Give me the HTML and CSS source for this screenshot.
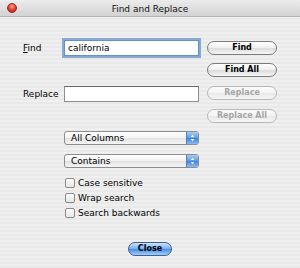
FILE: index.html
```html
<!DOCTYPE html>
<html>
<head>
<meta charset="utf-8">
<link rel="stylesheet" href="styles.css">
</head>
<body>
<div class="window">
  <div class="titlebar">
    <span class="close-dot"></span>
    <span class="title">Find and Replace</span>
    <span></span>
  </div>
  <div class="content">
    <div class="form">
      <span class="lbl"><u>F</u>ind</span>
      <div class="field focus">california</div>
      <button class="btn first">Find</button>

      <button class="btn col3">Find All</button>

      <span class="lbl">Replace</span>
      <div class="field"></div>
      <button class="btn disabled">Replace</button>

      <button class="btn disabled col3">Replace All</button>

      <div class="popup col2">
        <span class="popup-text">All Columns</span>
        <span class="popup-arrows"><svg width="12" height="12" viewBox="0 0 12 12"><path d="M6 2.5 L8 5 L4 5 Z M6 9.5 L8 7 L4 7 Z" fill="#fff"/></svg></span>
      </div>
      <div class="popup col2">
        <span class="popup-text">Contains</span>
        <span class="popup-arrows"><svg width="12" height="12" viewBox="0 0 12 12"><path d="M6 2.5 L8 5 L4 5 Z M6 9.5 L8 7 L4 7 Z" fill="#fff"/></svg></span>
      </div>

      <div class="checks col2">
        <div class="check"><span class="box"></span><span>Case sensitive</span></div>
        <div class="check"><span class="box"></span><span>Wrap search</span></div>
        <div class="check"><span class="box"></span><span>Search backwards</span></div>
      </div>
    </div>
    <div class="footer">
      <button class="btn default">Close</button>
    </div>
  </div>
</div>
</body>
</html>
```
FILE: styles.css
```css
* { box-sizing: border-box; }
html, body { margin: 0; padding: 0; }
body {
  width: 300px;
  height: 268px;
  font-family: "DejaVu Sans", "Liberation Sans", sans-serif;
  font-size: 9px;
  color: #000;
  background: #ececec;
  overflow: hidden;
}
.window {
  width: 300px;
  height: 268px;
  display: flex;
  flex-direction: column;
  background: repeating-linear-gradient(#efefef 0 2px, #e9e9e9 2px 4px);
}
.titlebar {
  height: 17px;
  display: grid;
  grid-template-columns: 1fr auto 1fr;
  align-items: center;
  background: linear-gradient(#ececec, #d2d2d2);
  border-bottom: 1px solid #b4b4b4;
}
.close-dot {
  justify-self: start;
  margin-left: 7px;
  width: 10px;
  height: 10px;
  border-radius: 50%;
  background: radial-gradient(circle at 50% 30%, #ffb0a8 0, #f04a3c 40%, #b8140c 100%);
  border: 1px solid #8a2a22;
}
.title {
  font-size: 9px;
  color: #111;
  padding-top: 1px;
}
.content {
  flex: 1;
  padding: 23px 0 0 23px;
  display: flex;
  flex-direction: column;
}
.form {
  display: grid;
  grid-template-columns: 33px 135px 70px;
  grid-template-rows: 23px 23px 23px 22px 23px 23px auto;
  column-gap: 8px;
}
.col2 { grid-column: 2; }
.col3 { grid-column: 3; }
.lbl {
  grid-column: 1;
  align-self: start;
  padding-top: 3px;
  white-space: nowrap;
}
.field {
  grid-column: 2;
  height: 16px;
  background: #fff;
  border: 1px solid #8e8e8e;
  border-top-color: #6a6a6a;
  padding: 2px 0 0 3px;
  line-height: 11px;
}
.field.focus {
  box-shadow: 0 0 0 2px #86a9d6;
  border-color: #6d8fbb;
}
.btn {
  grid-column: 3;
  height: 14px;
  width: 70px;
  padding: 0;
  margin: 0;
  font-family: "DejaVu Sans", "Liberation Sans", sans-serif;
  font-size: 8px;
  font-weight: bold;
  line-height: 12px;
  color: #000;
  border: 1px solid #7c7c7c;
  border-radius: 7px;
  background: linear-gradient(#ffffff 0%, #f1f1f1 45%, #dcdcdc 55%, #f6f6f6 100%);
}
.btn.first { margin-top: 1px; }
.btn.disabled {
  color: #a6a6a6;
  border-color: #b8b8b8;
  background: linear-gradient(#fbfbfb 0%, #f4f4f4 45%, #e9e9e9 55%, #f6f6f6 100%);
}
.popup {
  height: 14px;
  display: flex;
  align-items: stretch;
  border: 1px solid #8c8c8c;
  border-radius: 3px;
  background: linear-gradient(#ffffff, #f2f2f2 50%, #e2e2e2 51%, #f4f4f4);
  overflow: hidden;
}
.popup-text {
  flex: 1;
  padding-left: 6px;
  line-height: 12px;
}
.popup-arrows {
  width: 12px;
  display: flex;
  align-items: center;
  justify-content: center;
  background: linear-gradient(#a6cbf3, #5f9ae4 50%, #3f82dc 51%, #86bdf3);
  border-left: 1px solid #5a7fb5;
}
.checks {
  grid-column: 2 / span 2;
  display: flex;
  flex-direction: column;
  padding-left: 1px;
  padding-top: 1px;
}
.check {
  height: 15px;
  display: flex;
  align-items: flex-start;
  gap: 3px;
}
.check span:last-child { line-height: 10px; }
.box {
  width: 10px;
  height: 10px;
  border: 1px solid #8a8a8a;
  border-radius: 2px;
  background: linear-gradient(#fdfdfd, #e6e6e6);
}
.footer {
  display: flex;
  padding-left: 105px;
  margin-top: 19px;
}
.btn.default {
  width: 44px;
  font-size: 8px;
  border-color: #3f5f96;
  background: linear-gradient(#cfe4fb 0%, #7db2ee 45%, #4e90e4 55%, #9fd0fa 100%);
}
```
